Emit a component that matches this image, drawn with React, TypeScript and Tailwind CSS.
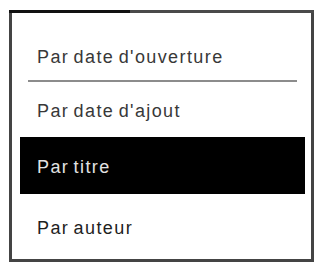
const items = [
  { label: "Par date d'ouverture", h: 'h-[50px]', tone: 'text-[#383838]' },
  { label: "Par date d'ajout", h: 'h-[55px]', tone: 'text-[#383838]' },
  { label: 'Par titre', h: 'h-[57px]', tone: 'text-[#e2e2e2]', active: true },
  { label: 'Par auteur', h: 'h-[64px]', tone: 'text-[#1e1e1e]' },
];

export default function App() {
  return (
    <div className="w-[318px] h-[264px] bg-white pl-[9px] pt-[10px] font-['Liberation_Sans',Arial,sans-serif]">
      <div className="w-[305px] h-[252px] flex flex-col">
        {/* top edge: darker part on the left */}
        <div className="flex h-[3px] shrink-0">
          <div className="w-[121px] bg-[#111]" />
          <div className="flex-1 bg-[#4a4a4a]" />
        </div>
        <div className="flex-1 border-x-[3px] border-b-[3px] border-[#444] pt-[17px] flex flex-col">
          {items.map((item, i) => (
            <div key={item.label} className="flex flex-col">
              <div
                className={`${item.h} flex items-center ${
                  item.active ? 'bg-black ml-[8px] mr-[6px] pl-[17px]' : 'pl-[25px]'
                }`}
              >
                <span
                  className={`pt-[3px] text-[18px] tracking-[1.4px] [word-spacing:-2px] leading-none ${item.tone}`}
                >
                  {item.label}
                </span>
              </div>
              {i === 0 && <div className="h-[2px] ml-[16px] mr-[14px] bg-[#8c8c8c]" />}
            </div>
          ))}
        </div>
      </div>
    </div>
  );
}
